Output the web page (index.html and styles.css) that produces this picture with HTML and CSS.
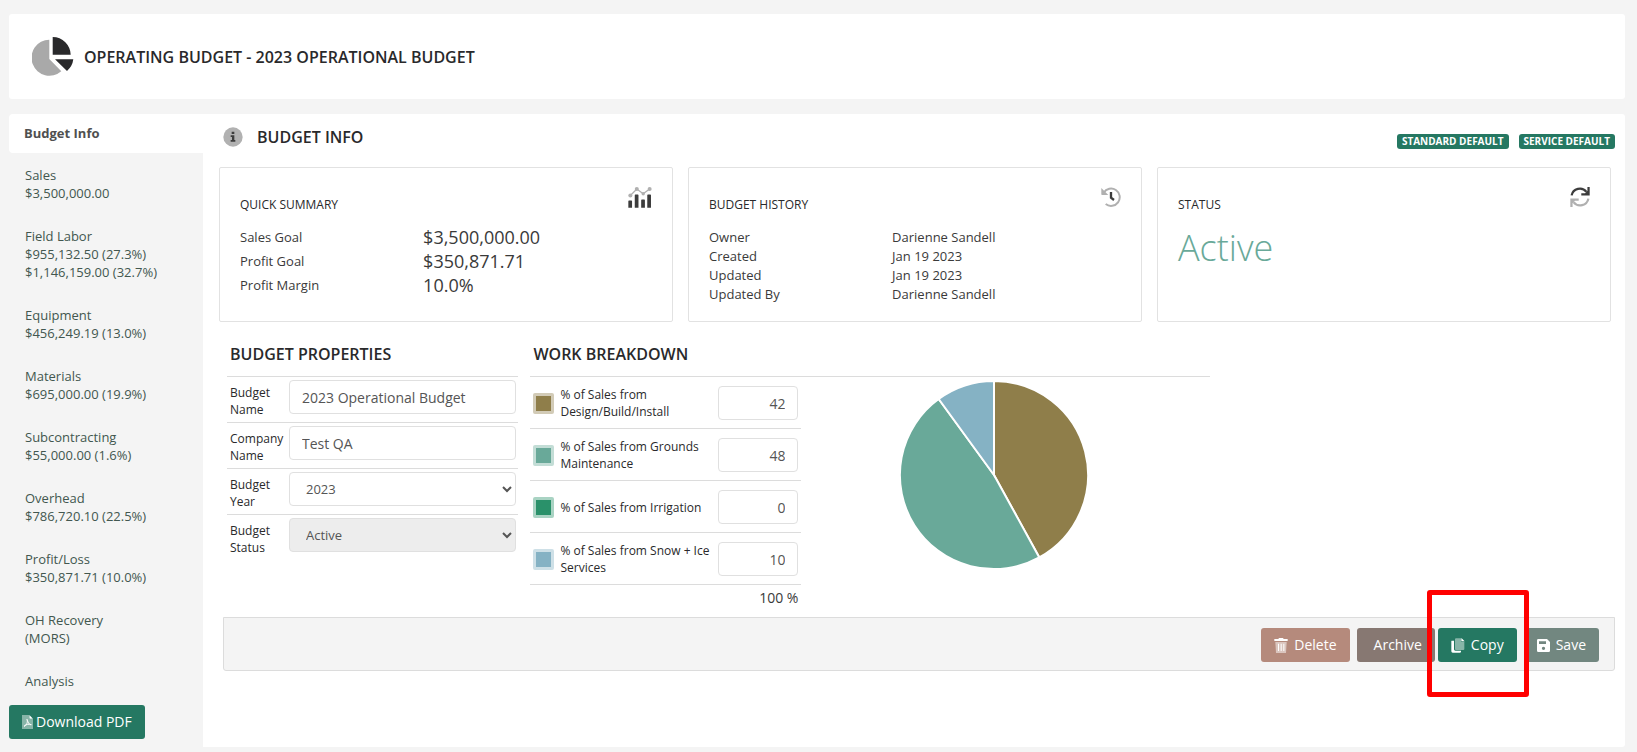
FILE: index.html
```html
<!DOCTYPE html>
<html lang="en">
<head>
    <meta charset="UTF-8">
    <meta name="viewport" content="width=device-width, initial-scale=1.0">
    <title>Operating Budget - 2023 Operational Budget</title>
    <link rel="stylesheet" href="styles.css">
</head>
<body>
    <!-- Page title bar -->
    <header class="page-header">
        <svg class="title-icon" viewBox="0 0 42 39">
            <path fill="#a9a9a9" d="M17.3 2.7V22L29.3 34.3A18 18 0 1 1 17.3 2.7z"/>
            <path fill="#29292b" d="M20.7 0A18 18 0 0 1 38.7 17.7H20.7zM23 22.3H41.3A18 18 0 0 1 35 33.9z"/>
        </svg>
        <h1>OPERATING BUDGET - 2023 OPERATIONAL BUDGET</h1>
    </header>

    <div class="layout">
        <!-- Sidebar -->
        <div class="sidebar">
            <nav>
                <a class="nav-item active" href="#">Budget Info</a>
                <a class="nav-item" href="#"><span>Sales</span><span>$3,500,000.00</span></a>
                <a class="nav-item" href="#"><span>Field Labor</span><span>$955,132.50 (27.3%)</span><span>$1,146,159.00 (32.7%)</span></a>
                <a class="nav-item" href="#"><span>Equipment</span><span>$456,249.19 (13.0%)</span></a>
                <a class="nav-item" href="#"><span>Materials</span><span>$695,000.00 (19.9%)</span></a>
                <a class="nav-item" href="#"><span>Subcontracting</span><span>$55,000.00 (1.6%)</span></a>
                <a class="nav-item" href="#"><span>Overhead</span><span>$786,720.10 (22.5%)</span></a>
                <a class="nav-item" href="#"><span>Profit/Loss</span><span>$350,871.71 (10.0%)</span></a>
                <a class="nav-item" href="#"><span>OH Recovery</span><span>(MORS)</span></a>
                <a class="nav-item" href="#"><span>Analysis</span></a>
            </nav>
            <button type="button" class="btn btn-green btn-pdf">
                <svg width="11" height="14" viewBox="0 0 33 42">
                    <path fill="#fff" opacity=".45" d="M0 0H21V12H33V42H0z"/>
                    <path fill="#fff" d="M22 0L33 11H22z"/>
                    <path fill="none" stroke="#fff" stroke-width="3" d="M15 13C19 25 23 30 28 29C20 26 12 28 6 34C14 30 18 22 15 13z"/>
                </svg>
                <span>Download PDF</span>
            </button>
        </div>

        <!-- Main panel -->
        <main class="panel">
            <div class="panel-heading">
                <svg width="20" height="20" viewBox="0 0 60 60">
                    <circle cx="30" cy="30" r="29" fill="#b1b1b1"/>
                    <path fill="#3c3c3c" d="M26 14h8v7h-8zM23 25h11v14h3v5H23v-5h4v-9h-4z"/>
                </svg>
                <h2>BUDGET INFO</h2>
                <div class="badges">
                    <span class="badge">STANDARD DEFAULT</span>
                    <span class="badge">SERVICE DEFAULT</span>
                </div>
            </div>

            <div class="cards">
                <section class="card">
                    <div class="card-header">
                        <h3>QUICK SUMMARY</h3>
                        <svg width="24" height="21" viewBox="0 0 71 62">
                            <path fill="#3c3c3c" d="M1 42q0-2 2-2h7q2 0 2 2v19H1zM20 24q0-2 2-2h7q2 0 2 2v37H20zM39 39q0-2 2-2h7q2 0 2 2v22H39zM57 24q0-2 2-2h7q2 0 2 2v37H57z"/>
                            <path fill="none" stroke="#b0b0b0" stroke-width="4" d="M7 25L26 6L45 20L64 6"/>
                            <g fill="#b0b0b0">
                                <circle cx="7" cy="25" r="6"/>
                                <circle cx="26" cy="6" r="6"/>
                                <circle cx="45" cy="20" r="5"/>
                                <circle cx="64" cy="6" r="6"/>
                            </g>
                        </svg>
                    </div>
                    <dl class="summary">
                        <div><dt>Sales Goal</dt><dd>$3,500,000.00</dd></div>
                        <div><dt>Profit Goal</dt><dd>$350,871.71</dd></div>
                        <div><dt>Profit Margin</dt><dd>10.0%</dd></div>
                    </dl>
                </section>

                <section class="card">
                    <div class="card-header">
                        <h3>BUDGET HISTORY</h3>
                        <svg width="20" height="20" viewBox="0 0 60 60">
                            <path fill="none" stroke="#b0b0b0" stroke-width="6" d="M8 17A26 26 0 1 1 14 51"/>
                            <path fill="#b0b0b0" d="M1 3L22 24H3q-2 0-2-2z"/>
                            <path fill="none" stroke="#3c3c3c" stroke-width="7" d="M30 15V32L39 39"/>
                        </svg>
                    </div>
                    <dl class="history">
                        <div><dt>Owner</dt><dd>Darienne Sandell</dd></div>
                        <div><dt>Created</dt><dd>Jan 19 2023</dd></div>
                        <div><dt>Updated</dt><dd>Jan 19 2023</dd></div>
                        <div><dt>Updated By</dt><dd>Darienne Sandell</dd></div>
                    </dl>
                </section>

                <section class="card">
                    <div class="card-header">
                        <h3>STATUS</h3>
                        <svg width="20" height="20" viewBox="0 0 62 62">
                            <path fill="none" stroke="#3c3c3c" stroke-width="7" d="M5 26A26 26 0 0 1 51 15"/>
                            <path fill="#3c3c3c" d="M54 0h7v26H35v-7h12l7-7z"/>
                            <path fill="none" stroke="#b0b0b0" stroke-width="7" d="M57 36A26 26 0 0 1 11 47"/>
                            <path fill="#b0b0b0" d="M8 62H1V36h26v7H15l-7 7z"/>
                        </svg>
                    </div>
                    <p class="status-text">Active</p>
                </section>
            </div>

            <div class="sections">
                <!-- Budget properties -->
                <section>
                    <h2>BUDGET PROPERTIES</h2>
                    <div class="prop-row">
                        <label for="budget-name">Budget Name</label>
                        <input class="field" type="text" id="budget-name" value="2023 Operational Budget">
                    </div>
                    <div class="prop-row">
                        <label for="company-name">Company Name</label>
                        <input class="field" type="text" id="company-name" value="Test QA">
                    </div>
                    <div class="prop-row">
                        <label for="budget-year">Budget Year</label>
                        <select class="field" id="budget-year">
                            <option selected>2023</option>
                        </select>
                    </div>
                    <div class="prop-row">
                        <label for="budget-status">Budget Status</label>
                        <select class="field" id="budget-status" disabled>
                            <option selected>Active</option>
                        </select>
                    </div>
                </section>

                <!-- Work breakdown -->
                <section>
                    <h2>WORK BREAKDOWN</h2>
                    <div class="breakdown">
                        <div class="work-list">
                            <div class="work-row">
                                <span class="swatch design"></span>
                                <label for="pct-design">% of Sales from Design/Build/Install</label>
                                <input class="field" type="text" id="pct-design" value="42">
                            </div>
                            <div class="work-row">
                                <span class="swatch grounds"></span>
                                <label for="pct-grounds">% of Sales from Grounds Maintenance</label>
                                <input class="field" type="text" id="pct-grounds" value="48">
                            </div>
                            <div class="work-row">
                                <span class="swatch irrigation"></span>
                                <label for="pct-irrigation">% of Sales from Irrigation</label>
                                <input class="field" type="text" id="pct-irrigation" value="0">
                            </div>
                            <div class="work-row">
                                <span class="swatch snow"></span>
                                <label for="pct-snow">% of Sales from Snow + Ice Services</label>
                                <input class="field" type="text" id="pct-snow" value="10">
                            </div>
                            <div class="work-total">100 %</div>
                        </div>
                        <div class="pie">
                            <svg width="188" height="188" viewBox="-94 -94 188 188">
                                <g stroke="#fff" stroke-width="2">
                                    <path fill="#8f7e4a" d="M0 0V-94A94 94 0 0 1 45.3 82.4z"/>
                                    <path fill="#69a999" d="M0 0L45.3 82.4A94 94 0 0 1-55.3-76z"/>
                                    <path fill="#85b2c4" d="M0 0L-55.3-76A94 94 0 0 1 0-94z"/>
                                </g>
                            </svg>
                        </div>
                    </div>
                </section>
            </div>

            <!-- Actions -->
            <div class="actions">
                <button type="button" class="btn btn-delete">
                    <svg width="14" height="15" viewBox="0 0 42 45">
                        <path fill="#fff" opacity=".5" d="M4 12H38L36 45H6z"/>
                        <path fill="#fff" d="M1 3H13L15 0H27L29 3H41V9H1zM12 17h3v22h-3zM20 17h3v22h-3zM28 17h3v22h-3z"/>
                    </svg>
                    <span>Delete</span>
                </button>
                <button type="button" class="btn btn-archive">Archive</button>
                <div class="highlight">
                    <button type="button" class="btn btn-green">
                        <svg width="14" height="15" viewBox="0 0 42 45">
                            <path fill="#fff" d="M2 8H9V34Q9 38 13 38H30V41Q30 44 26 44H5Q1 44 1 40V9z"/>
                            <path fill="#fff" opacity=".45" d="M15 1H30V11H40V33Q40 36 37 36H15Q12 36 12 33V4Q12 1 15 1z"/>
                            <path fill="#fff" d="M31 0L41 10H31z"/>
                        </svg>
                        <span>Copy</span>
                    </button>
                </div>
                <button type="button" class="btn btn-save">
                    <svg width="13" height="13" viewBox="0 0 39 39">
                        <path fill="#fff" fill-rule="evenodd" d="M4 0H30L39 9V35Q39 39 35 39H4Q0 39 0 35V4Q0 0 4 0zM6 7V15H27V7zM19.500 23A5 5 0 1 0 19.500 33A5 5 0 1 0 19.500 23z"/>
                    </svg>
                    <span>Save</span>
                </button>
            </div>
        </main>
    </div>
</body>
</html>
```
FILE: styles.css
```css
* {
    margin: 0;
    padding: 0;
    box-sizing: border-box;
}

body {
    padding: 14px 12px 4px 9px;
    background: #f4f4f4;
    color: #3a3a3a;
    font-family: "Open Sans", "Noto Sans", sans-serif;
    font-size: 13px;
    line-height: 18px;
}

svg {
    display: block;
    flex-shrink: 0;
}

h1, h2 {
    color: #29292b;
    font-size: 16px;
    font-weight: 600;
    line-height: 24px;
}

/* Title bar */
.page-header {
    display: flex;
    align-items: center;
    gap: 10px;
    margin-bottom: 15px;
    padding: 23px;
    background: #fff;
    border-radius: 3px;
}

.title-icon {
    width: 42px;
    height: 39px;
}

.layout {
    display: flex;
}

/* Sidebar */
.sidebar {
    flex: 0 0 194px;
}

.nav-item {
    display: block;
    padding: 13px 16px 12px;
    color: #42574f;
    text-decoration: none;
}

.nav-item span {
    display: block;
}

.nav-item.active {
    padding: 10px 15px 11px;
    background: #fff;
    border-radius: 4px 0 0 4px;
    color: #505050;
    font-weight: 700;
}

.btn {
    display: flex;
    align-items: center;
    gap: 6px;
    height: 34px;
    padding: 0 13px;
    border: none;
    border-radius: 3px;
    color: #fff;
    font-family: inherit;
    font-size: 14px;
    font-weight: 500;
    line-height: 20px;
    cursor: pointer;
}

.btn-green {
    background: #257862;
}

.btn-pdf {
    gap: 3px;
    margin-top: 3px;
}

/* Main panel */
.panel {
    flex: 1;
    min-width: 0;
    padding: 0 10px 76px 16px;
    background: #fff;
    border-radius: 0 3px 3px 0;
}

.panel-heading {
    display: flex;
    align-items: center;
    gap: 14px;
    padding: 11px 0 18px 4px;
}

.badges {
    display: flex;
    gap: 10px;
    margin-left: auto;
    padding-top: 8px;
}

.badge {
    padding: 0 5px;
    background: #257862;
    border-radius: 3px;
    color: #fff;
    font-size: 10px;
    font-weight: 700;
    line-height: 15px;
}

/* Summary cards */
.cards {
    display: grid;
    grid-template-columns: repeat(3, 1fr);
    gap: 15px;
    margin-right: 4px;
}

.card {
    padding: 19px 20px 17px;
    border: 1px solid #e2e2e2;
    border-radius: 2px;
}

.card-header {
    display: flex;
    justify-content: space-between;
    margin-bottom: 11px;
}

.card-header h3 {
    padding-top: 9px;
    color: #29292b;
    font-size: 12px;
    font-weight: 500;
}

.card dl div {
    display: grid;
    grid-template-columns: 4fr 5fr;
}

.summary {
    line-height: 24px;
}

.summary dd {
    font-size: 18px;
    font-weight: 500;
}

.history {
    padding-top: 3px;
    line-height: 19px;
}

.status-text {
    color: #69a999;
    font-size: 36px;
    font-weight: 300;
    line-height: 46px;
}

/* Properties and breakdown */
.sections {
    display: grid;
    grid-template-columns: 3fr 7fr 4fr;
    gap: 12px;
    padding: 0 4px 0 8px;
}

.sections h2 {
    padding: 20px 3px 10px;
}

.sections label {
    color: #29292b;
    font-size: 12px;
    line-height: 17px;
}

.field {
    height: 34px;
    padding: 0 12px;
    background: #fff;
    border: 1px solid #e0e0e0;
    border-radius: 4px;
    color: #555;
    font-family: inherit;
    font-size: 14px;
}

select.field {
    padding-right: 0;
    font-size: 13px;
}

select.field:disabled {
    background: #ededed;
    opacity: 1;
}

.prop-row {
    display: flex;
    height: 46px;
    padding: 3px 2px 8px 3px;
    border-top: 1px solid #dcdcdc;
}

.prop-row label {
    flex: 0 0 59px;
    padding-top: 4px;
}

.prop-row .field {
    flex: 1;
    min-width: 0;
}

.breakdown {
    display: flex;
    border-top: 1px solid #dcdcdc;
}

.work-list {
    flex: 0 0 271px;
}

.work-row {
    display: flex;
    align-items: center;
    padding: 9px 3px 8px;
    border-bottom: 1px solid #dcdcdc;
}

.work-row label {
    flex: 1;
    padding: 0 6px;
}

.work-row .field {
    width: 80px;
    text-align: right;
}

.swatch {
    width: 21px;
    height: 21px;
    border: 3px solid;
    border-radius: 2px;
}

.swatch.design {
    background: #8f7e4a;
    border-color: #d2cbb7;
}

.swatch.grounds {
    background: #69a999;
    border-color: #c3ddd6;
}

.swatch.irrigation {
    background: #2a916a;
    border-color: #a9d3c3;
}

.swatch.snow {
    background: #85b2c4;
    border-color: #cee0e7;
}

.work-total {
    padding: 3px 3px 9px;
    font-size: 14px;
    line-height: 20px;
    text-align: right;
}

.pie {
    display: flex;
    flex: 1;
    justify-content: center;
    padding: 4px 24px 0 0;
}

/* Action bar */
.actions {
    display: flex;
    justify-content: flex-end;
    gap: 7px;
    margin-left: 4px;
    padding: 10px 15px 8px;
    background: #f4f4f4;
    border: 1px solid #dcdcdc;
    border-radius: 0 0 3px 3px;
}

.btn-delete {
    background: #b58a7c;
}

.btn-archive {
    padding-left: 17px;
    background: #877872;
}

.btn-save {
    background: #728780;
}

.highlight {
    position: relative;
    margin-left: -4px;
}

/* Red frame around the Copy button */
.highlight::after {
    content: "";
    position: absolute;
    top: -38px;
    right: -12px;
    bottom: -35px;
    left: -11px;
    border: 5px solid #f00;
    border-radius: 3px;
    pointer-events: none;
}
```
